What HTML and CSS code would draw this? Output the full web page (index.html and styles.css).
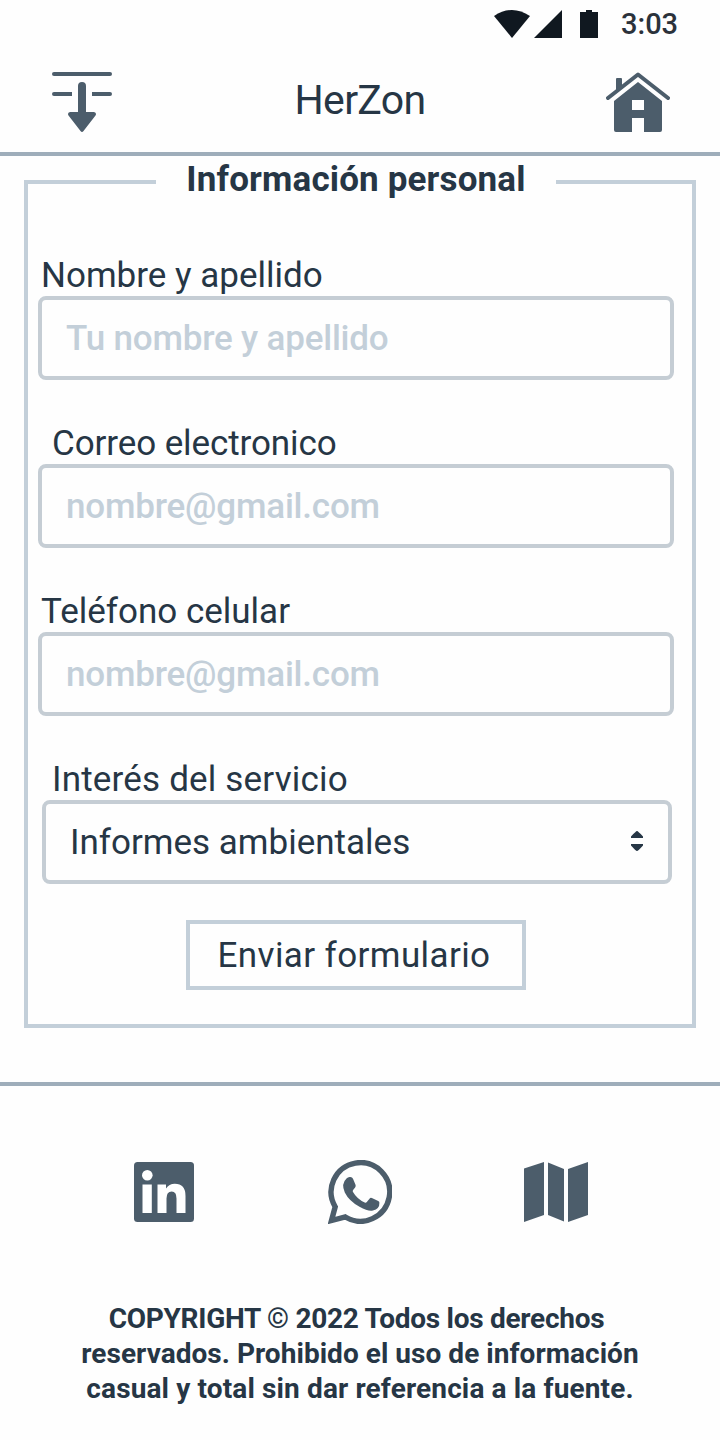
FILE: index.html
```html
<!DOCTYPE html>
<html lang="es">
<head>
<meta charset="utf-8">
<title>HerZon</title>
<link rel="stylesheet" href="styles.css">
</head>
<body>
<div class="status">
  <svg class="status-icons" width="106" height="28" viewBox="0 0 106 28" fill="#101820">
    <path d="M0 6Q18-6 36 6L18 28Z"/>
    <path d="M68 0V28H40Z"/>
    <path d="M92 0h6v2h6v26H86V2h6Z"/>
  </svg>
  <span class="clock">3:03</span>
</div>
<header class="header">
  <svg width="60" height="60" viewBox="0 0 60 60" fill="#4c5d6b">
    <rect width="60" height="4" rx="2"/>
    <path d="M2 20H20v4H2a2 2 0 0 1 0-4ZM40 20H58a2 2 0 0 1 0 4H40Z"/>
    <path d="M26 14a4 4 0 0 1 8 0V40h8q3 1 1.500 3.500L31.500 59q-1.500 2-3 0L16.500 43.500Q15 41 18 40h8Z"/>
  </svg>
  <h1 class="brand">HerZon</h1>
  <svg width="64" height="60" viewBox="0 0 64 60" fill="#4c5d6b">
    <path d="M10 7q0-1 1-1h4q1 0 1 1v7l-6 5Z"/>
    <path d="M2 26L32 2.500 62 26" fill="none" stroke="#4c5d6b" stroke-width="4" stroke-linecap="round" stroke-linejoin="round"/>
    <path fill-rule="evenodd" d="M32 10L56 29V58q0 2-2 2H38V46H26V60H10q-2 0-2-2V29ZM26 28V38H38V28Z"/>
  </svg>
</header>
<main>
  <form>
    <fieldset class="panel">
      <legend class="legend"><span class="legend-text">Información personal</span></legend>
      <div class="fields">
        <div class="field">
          <label class="label" for="name">Nombre y apellido</label>
          <input class="control" id="name" type="text" placeholder="Tu nombre y apellido">
        </div>
        <div class="field">
          <label class="label label-mail" for="mail">Correo electronico</label>
          <input class="control" id="mail" type="email" placeholder="nombre@gmail.com">
        </div>
        <div class="field">
          <label class="label" for="phone">Teléfono celular</label>
          <input class="control" id="phone" type="tel" placeholder="nombre@gmail.com">
        </div>
        <div class="field">
          <span class="label label-service">Interés del servicio</span>
          <div class="select">
            <span class="select-value">Informes ambientales</span>
            <svg width="12" height="20" viewBox="0 0 12 20" fill="#263645"><path d="M6 0Q7 0 12 5.500V7H0V5.500Q5 0 6 0ZM0 13H12V14.500Q7 20 6 20T0 14.500Z"/></svg>
          </div>
        </div>
      </div>
      <button class="submit" type="button">Enviar formulario</button>
    </fieldset>
  </form>
</main>
<footer class="footer">
  <nav class="social">
    <svg width="60" height="60" viewBox="0 0 60 60">
      <rect width="60" height="60" rx="3.500" fill="#4c5d6b"/>
      <g fill="#fff"><circle cx="13.300" cy="13.300" r="5.300"/><path d="M8.500 22.500h9.300V51H8.500ZM23.500 22.500h8.500v4q3-4.700 8.800-4.700Q51.500 21.800 51.500 34V51h-9V36.500q0-7-4.800-7-5.200 0-5.200 7V51h-9Z"/></g>
    </svg>
    <svg class="whatsapp" width="64" height="64" viewBox="0 0 64 64">
      <path d="M3.500 60.500L7.200 46.800A29.300 29.300 0 1 1 17.300 57Z" fill="none" stroke="#4c5d6b" stroke-width="5.400"/>
      <path d="M18.500 18.500q1.500-1.700 3.500-1.500 2.200-.2 3 1.700l2.600 6.200q.4 1.300-.5 2.500l-2 2.600q-.8.900-.1 2 4 7 11.700 10.500 1.200.6 2.100-.4l2.900-3.600q.8-1.200 2.200-.5l6.300 3q1.300.7 1.200 1.800.3 6.200-6.500 7.700-4.500 1.200-13.400-3.700Q21 41 16.800 32.500q-3.900-8.800 1.700-14Z" fill="#4c5d6b"/>
    </svg>
    <svg width="64" height="60" viewBox="0 0 64 60" fill="#4c5d6b"><path d="M0 6.500L20 0V53L0 60ZM24 .5L40 7V59.500L24 53ZM44 7L64 0V53L44 60Z"/></svg>
  </nav>
  <p class="copyright">
    <span class="line line-1">COPYRIGHT © 2022 Todos los derechos</span>
    <span class="line line-2">reservados. Prohibido el uso de información</span>
    <span class="line line-3">casual y total sin dar referencia a la fuente.</span>
  </p>
</footer>
</body>
</html>
```
FILE: styles.css
```css
* { box-sizing: border-box; }
body {
  margin: 0;
  min-height: 1440px;
  background: #fefefe;
  color: #263645;
  font-family: Roboto, "Liberation Sans", sans-serif;
  font-size: 35px;
}
svg { display: block; flex: none; }
.status {
  display: flex;
  height: 48px;
  padding: 10px 0 0 494px;
}
.clock {
  margin: -2px 0 0 21px;
  color: #2b323b;
  font-size: 29px;
  font-weight: 500;
  line-height: 32px;
}
.header {
  display: grid;
  grid-template-columns: 64px 1fr 64px;
  align-items: start;
  height: 108px;
  padding: 24px 50px 0 52px;
  border-bottom: 4px solid #9eadba;
}
.brand {
  margin: 4px 0 0 -2px;
  font-size: 41px;
  font-weight: 400;
  letter-spacing: -0.7px;
  line-height: 48px;
  text-align: center;
}
.panel {
  height: 868px;
  margin: 4px 24px 0;
  padding: 0;
  border: 4px solid #c3cfd9;
}
.legend {
  width: 400px;
  height: 44px;
  margin-left: 128px;
  padding: 0 0 4px;
}
.legend-text {
  display: block;
  font-weight: 700;
  letter-spacing: 0.15px;
  line-height: 40px;
  text-align: center;
}
.fields {
  display: grid;
  gap: 42px;
  padding: 50px 18px 0 10px;
}
.field { display: grid; }
.label {
  width: max-content;
  height: 42px;
  margin-left: 3px;
  line-height: 44px;
}
.label-mail { margin-left: 14px; letter-spacing: -0.1px; }
.label-service { margin-left: 14px; letter-spacing: 0.18px; }
.control {
  width: 100%;
  height: 84px;
  padding: 0 24px;
  border: 4px solid #c5cdd4;
  border-radius: 8px;
  background: transparent;
  color: inherit;
  font: inherit;
  font-weight: 500;
  letter-spacing: -0.2px;
}
.control::placeholder { color: #c3cfd9; opacity: 1; }
.select {
  display: flex;
  align-items: center;
  justify-content: space-between;
  height: 84px;
  margin: 0 2px 0 4px;
  padding: 0 25px 2px 24px;
  border: 4px solid #c5cdd4;
  border-radius: 8px;
}
.select-value { padding-top: 2px; }
.submit {
  display: block;
  width: 340px;
  height: 70px;
  margin: 36px 0 0 158px;
  padding: 0 4px 0 0;
  border: 4px solid #c3cfd9;
  background: transparent;
  color: inherit;
  font: inherit;
  letter-spacing: 0.4px;
}
.footer {
  margin-top: 54px;
  border-top: 4px solid #9eadba;
}
.social {
  display: flex;
  align-items: center;
  justify-content: space-between;
  padding: 74px 132px 0 134px;
}
.whatsapp { margin-left: 2px; }
.copyright {
  margin: 77px 0 0;
  font-size: 28px;
  font-weight: 700;
  line-height: 35px;
  text-align: center;
}
.line { display: block; white-space: nowrap; }
.line-1 { padding-right: 7px; letter-spacing: -0.28px; }
.line-2 { letter-spacing: 0.04px; }
.line-3 { letter-spacing: 0.13px; }
```
